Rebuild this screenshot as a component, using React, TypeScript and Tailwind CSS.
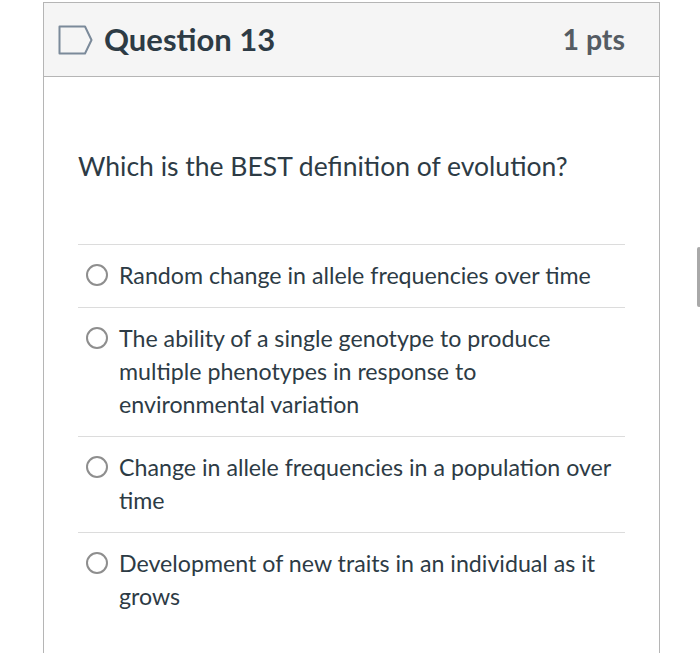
import React from 'react';

const answers = [
  'Random change in allele frequencies over time',
  'The ability of a single genotype to produce multiple phenotypes in response to environmental variation',
  'Change in allele frequencies in a population over time',
  'Development of new traits in an individual as it grows',
];

const FlagIcon = () => (
  <svg width="36" height="30" viewBox="0 0 36 30" className="shrink-0">
    <path d="M1.5 1.5 H27 L33.5 15 L27 28.5 H1.5 Z" fill="none" stroke="#7b8a9a" strokeWidth="2" strokeLinejoin="round" />
  </svg>
);

export default function App() {
  return (
    <div className="relative w-[700px] h-[653px] bg-white overflow-hidden font-['Lato','Noto_Sans',sans-serif]">
      {/* question card */}
      <div className="ml-[43px] mt-[2px] w-[617px] border-x border-t border-[#b5b5b5]">
        <div className="h-[74px] bg-[#f5f5f5] border-b border-[#b5b5b5] flex items-center pl-[14px] pr-[34px]">
          <FlagIcon />
          <h2 className="ml-[10px] text-[31px] font-bold text-[#2d3b45]">Question 13</h2>
          <span className="ml-auto text-[28.5px] font-bold text-[#555c63]">1 pts</span>
        </div>
        <div className="px-[34px] pt-[74px] h-[600px]">
          <p className="text-[26.5px] text-[#2d3b45] leading-[30px]">Which is the BEST definition of evolution?</p>
          <div className="mt-[63px] border-t border-[#dcdcdc]">
            {answers.map((a, i) => (
              <div
                key={i}
                className="flex items-start gap-[11px] pl-[8px] pt-[14px] pb-[15.5px] border-b border-[#dcdcdc] last:border-b-0"
              >
                <span className="mt-[5px] w-[22px] h-[22px] shrink-0 rounded-full border-2 border-[#8e8e8e] bg-white" />
                <span className="text-[23.2px] leading-[32.8px] text-[#2d3b45]">{a}</span>
              </div>
            ))}
          </div>
        </div>
      </div>
      {/* scrollbar thumb */}
      <div className="absolute left-[697px] top-[247px] w-[4px] h-[60px] rounded-full bg-[#a9a9a9]" />
    </div>
  );
}
